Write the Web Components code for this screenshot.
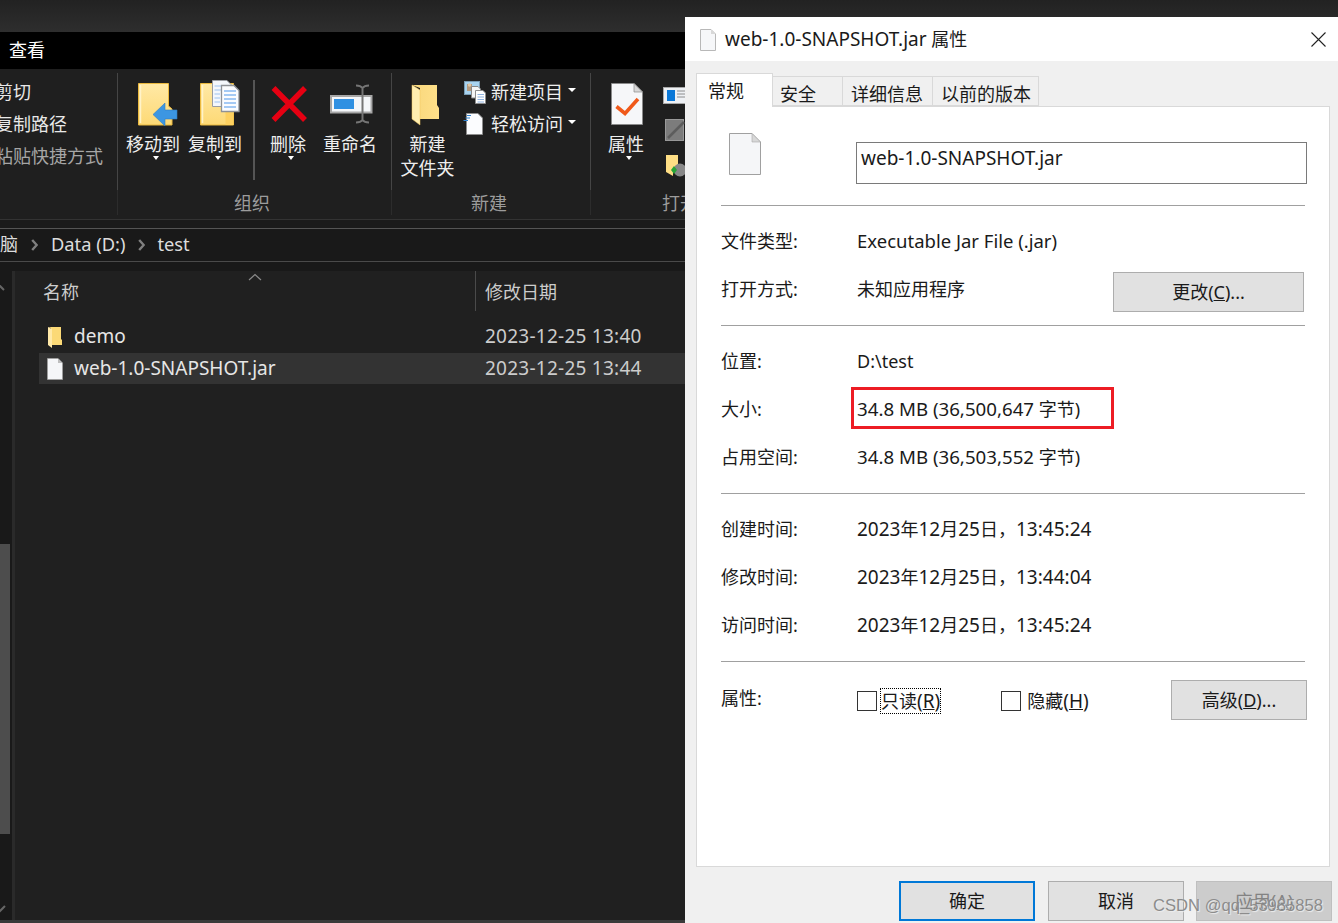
<!DOCTYPE html>
<html lang="zh-CN"><head><meta charset="utf-8"><title>属性</title>
<style>
html,body{margin:0;padding:0;height:100%}
body{width:1338px;height:923px;overflow:hidden;font:18px/24px "Noto Sans","Noto Sans CJK SC",sans-serif;background:#1f1f1f}
</style></head><body>
<app-shell>
  <explorer-window>
    <tab-strip-dark>查看</tab-strip-dark>
    <dark-ribbon>
      <ribbon-group style="width:118px">
        <clip-list>
          <clip-item>剪切</clip-item><clip-item>复制路径</clip-item><clip-item dim>粘贴快捷方式</clip-item>
        </clip-list>
      </ribbon-group>
      <ribbon-group label="组织" style="width:274px;--pad:4px;--labr:5px">
        <ribbon-button caret>
          <svg slot="icon" width="62" height="52" viewBox="122 78 62 52">
            <defs><linearGradient id="fg" x1="0" y1="0" x2="0" y2="1"><stop offset="0" stop-color="#ffe9a6"/><stop offset="1" stop-color="#fdd975"/></linearGradient></defs>
            <path d="M138.500 83.500H168.500V106L172 109V125H138.500Z" fill="url(#fg)" stroke="#eab93f"/>
            <path d="M140.500 85V123" stroke="#fff3c9" stroke-width="1.500"/>
            <path d="M153 114.500L165 103V110H177V119H165V126Z" fill="#3c96e2" stroke="#2f7cc4" stroke-width=".6"/>
          </svg>移动到</ribbon-button>
        <ribbon-button caret>
          <svg slot="icon" width="62" height="52" viewBox="184 78 62 52">
            <path d="M200.500 83.500H233.500V125H200.500Z" fill="url(#fg)" stroke="#eab93f"/>
            <path d="M202.500 85V123" stroke="#fff3c9" stroke-width="1.500"/>
            <path d="M225.500 108V125H233.500V108Z" fill="#fdd05f"/>
            <path d="M212.500 80.500H227L232.500 86V106.500H212.500Z" fill="#f4f7fc" stroke="#9a9da3"/>
            <path d="M214.500 86H224M214.500 90H224M214.500 94H220M214.500 98H220M214.500 102H220" stroke="#9dc2ef"/>
            <path d="M221.500 85.500H234L239 90.500V111.500H221.500Z" fill="#fbfcff" stroke="#8f9297" stroke-width="1.300"/>
            <path d="M224 91H236M224 95H236M224 99H236M224 103H236M224 107H236" stroke="#4f97ea"/>
          </svg>复制到</ribbon-button>
        <v-rule></v-rule>
        <ribbon-button caret>
          <svg slot="icon" width="62" height="52" viewBox="257 78 62 52">
            <path d="M273.500 88L305 120M305 88L273.500 120" stroke="#e60012" stroke-width="5.500"/>
          </svg>删除</ribbon-button>
        <ribbon-button>
          <svg slot="icon" width="62" height="52" viewBox="319 78 62 52">
            <rect x="331" y="96" width="40.500" height="16.500" fill="#f4f6f9" stroke="#a6a6a6" stroke-width="2"/>
            <rect x="334" y="99" width="20" height="10" fill="#2f90e2"/>
            <path d="M362.500 88V120M356 85.500C359 85.500 361 86 362.500 88C364 86 366 85.500 369 85.500M356 122.500C359 122.500 361 122 362.500 120C364 122 366 122.500 369 122.500" fill="none" stroke="#757575" stroke-width="2"/>
          </svg>重命名</ribbon-button>
      </ribbon-group>
      <ribbon-group label="新建" style="width:199px;--pad:8px;--labr:4px">
        <ribbon-button narrow>
          <svg slot="icon" width="55" height="52" viewBox="400 78 55 52">
            <defs><linearGradient id="nf" x1="0" y1="0" x2="1" y2="0"><stop offset="0" stop-color="#f8d77c"/><stop offset="1" stop-color="#ffe08a"/></linearGradient></defs>
            <path d="M412 85H437V105L439 108V119H420V88Z" fill="url(#nf)"/>
            <path d="M412 85L420 90V125L412 119Z" fill="#ffeeb0" stroke="#f0c65e" stroke-width=".5"/>
          </svg>新建<br>文件夹</ribbon-button>
        <small-col>
          <small-button caret>
            <svg slot="icon" width="24" height="26" viewBox="463 79 24 26">
              <rect x="464.500" y="81.500" width="15" height="13" fill="#a8d3ef" stroke="#7a9cb4"/>
              <rect x="467" y="84" width="5" height="7" fill="#b59a7e"/><circle cx="469.500" cy="85" r="1.700" fill="#e0c8a8"/>
              <path d="M471.500 86.500H478L480.500 89V98H471.500Z" fill="#f5f5f5" stroke="#888"/>
              <path d="M475.500 90.500H483L485.500 93V103.500H475.500Z" fill="#fff" stroke="#8d8d8d"/>
              <path d="M477.500 94.500H484M477.500 97H484M477.500 99.500H484M477.500 102H484" stroke="#8fb3e0"/>
            </svg>新建项目</small-button>
          <small-button caret>
            <svg slot="icon" width="24" height="26" viewBox="463 111 24 26">
              <path d="M466.500 113.500H478L482.500 118V134.500H466.500Z" fill="#fbfcfe" stroke="#8d8d8d"/>
              <path d="M467 115.500H471M465.500 118H470M463.500 120.500H468" stroke="#2f83d2" stroke-width="1.200"/>
            </svg>轻松访问</small-button>
        </small-col>
      </ribbon-group>
      <ribbon-group label="打开" style="flex:1;--pad:4px;--lab:71px;--labalign:left">
        <ribbon-button caret>
          <svg slot="icon" width="62" height="52" viewBox="595 78 62 52">
            <path d="M611.500 83.500H634L642.500 92V124.500H611.500Z" fill="#f6f7f9" stroke="#8a8a8a"/>
            <path d="M634 83.500V92H642.500Z" fill="#d8d8d8" stroke="#8a8a8a" stroke-width=".7"/>
            <path d="M616.500 106.500L625 113.500L638 99" fill="none" stroke="#f0591a" stroke-width="3.600"/>
          </svg>属性</ribbon-button>
        <svg class="open-icons" width="30" height="104" viewBox="660 76 30 104" style="margin:3px 0 0 3px;flex:none">
          <rect x="663.500" y="87.500" width="30" height="16" fill="#eef1f5" stroke="#a9a9a9"/>
          <rect x="667" y="90" width="8" height="11" fill="#0a78d8"/>
          <path d="M677 91H685M677 94H685M677 97H685" stroke="#8c8c8c"/>
          <rect x="665.500" y="119.500" width="18" height="21" fill="#7c7c7c" stroke="#999"/>
          <path d="M668 138L684 122" stroke="#5d5d5d" stroke-width="2.500"/>
          <path d="M666 155H678V170H673V176L666 172Z" fill="#ffdf85"/>
          <circle cx="680" cy="170" r="6.500" fill="#888"/>
          <path d="M671 170H677L674 166ZM671 170H677L674 174Z" fill="#27a536"/>
        </svg>
      </ribbon-group>
    </dark-ribbon>
    <ribbon-gap></ribbon-gap>
    <address-bar>
      <crumb-part>脑</crumb-part><bar-chevron></bar-chevron>
      <crumb-part><latin-text style="font-size:18.300px">Data (D:)</latin-text></crumb-part><bar-chevron style="margin-right:12px"></bar-chevron>
      <crumb-part><latin-text style="font-size:18.300px">test</latin-text></crumb-part>
    </address-bar>
    <file-area>
      <column-header></column-header>
      <file-row name="demo" date="2023-12-25 13:40">
        <svg slot="icon" width="18" height="24" viewBox="0 0 18 24"><path d="M2 2H15V14L16 15V20H5V3Z" fill="#fbd976"/><path d="M2 2L6 4V23L2 20Z" fill="#ffe9a8"/></svg>
      </file-row>
      <file-row selected name="web-1.0-SNAPSHOT.jar" date="2023-12-25 13:44">
        <svg slot="icon" width="18" height="24" viewBox="0 0 18 24"><path d="M1.500 1.500H12L16.500 6V22.500H1.500Z" fill="#f5f6f8" stroke="#a0a0a0" stroke-width=".8"/><path d="M12 1.500V6H16.500Z" fill="#bdbdbd"/></svg>
      </file-row>
    </file-area>
  </explorer-window>
  <properties-dialog>
    <dialog-title><latin-text>web-1.0-SNAPSHOT.jar</latin-text> 属性</dialog-title>
    <tab-row>
      <prop-tab active style="width:77px">常规</prop-tab>
      <prop-tab style="width:70px">安全</prop-tab>
      <prop-tab style="width:90px;--tp:8px">详细信息</prop-tab>
      <prop-tab style="width:106px;--tp:8px">以前的版本</prop-tab>
    </tab-row>
    <prop-panel>
      <name-row><latin-text>web-1.0-SNAPSHOT.jar</latin-text></name-row>
      <h-sep></h-sep>
      <row-group>
        <info-row label="文件类型:"><latin-text style="font-size:18.500px">Executable Jar File (.jar)</latin-text></info-row>
        <info-row label="打开方式:">未知应用程序<win-button slot="end" style="width:191px;margin:6px 2px 0 0">更改(<u>C</u>)...</win-button></info-row>
      </row-group>
      <h-sep></h-sep>
      <row-group>
        <info-row label="位置:">D:\test</info-row>
        <info-row label="大小:"><latin-text style="font-size:18.700px">34.8 MB (36,500,647</latin-text> 字节)</info-row>
        <info-row label="占用空间:"><latin-text style="font-size:18.700px">34.8 MB (36,503,552</latin-text> 字节)</info-row>
      </row-group>
      <h-sep></h-sep>
      <row-group>
        <info-row label="创建时间:"><latin-text>2023</latin-text>年<latin-text>12</latin-text>月<latin-text>25</latin-text>日，<latin-text>13:45:24</latin-text></info-row>
        <info-row label="修改时间:"><latin-text>2023</latin-text>年<latin-text>12</latin-text>月<latin-text>25</latin-text>日，<latin-text>13:44:04</latin-text></info-row>
        <info-row label="访问时间:"><latin-text>2023</latin-text>年<latin-text>12</latin-text>月<latin-text>25</latin-text>日，<latin-text>13:45:24</latin-text></info-row>
      </row-group>
      <h-sep></h-sep>
      <attr-row>
        <win-check focused>只读<latin-text>(<u>R</u>)</latin-text></win-check>
        <win-check>隐藏<latin-text>(<u>H</u>)</latin-text></win-check>
        <win-button slot="end" style="width:136px">高级(<u>D</u>)...</win-button>
      </attr-row>
    </prop-panel>
    <button-row>
      <win-button primary style="width:136px">确定</win-button>
      <win-button style="width:136px;margin-left:13px">取消</win-button>
      <win-button disabled style="width:136px;margin-left:12px">应用(<u>A</u>)</win-button>
    </button-row>
    <red-mark></red-mark>
  </properties-dialog>
  <water-mark>CSDN @qq_53985858</water-mark>
</app-shell>
<script>
function def(name,html){
  customElements.define(name,class extends HTMLElement{
    connectedCallback(){
      if(this.shadowRoot)return;
      const r=this.attachShadow({mode:'open'});
      r.innerHTML=typeof html==='function'?html(this):html;
    }
  });
}
def('latin-text',`<style>:host{display:inline;font-size:19px}</style><slot></slot>`);
def('app-shell',`<style>:host{display:flex;position:relative;width:1338px;height:923px;overflow:hidden;background:linear-gradient(#222,#2e2e2e 32px,#2e2e2e 33px,#1f1f1f 33px)}</style><slot></slot>`);
def('explorer-window',`<style>:host{display:flex;flex-direction:column;width:685px;flex:none;overflow:hidden;padding-top:32px;box-sizing:border-box;height:923px;color:#e8e8e8}</style><slot></slot>`);
def('tab-strip-dark',`<style>:host{display:flex;align-items:center;box-sizing:border-box;height:37px;background:#000;color:#fff;padding:0 0 2px 9px}</style><slot></slot>`);
def('dark-ribbon',`<style>:host{display:flex;height:150px;background:#1f1f1f;border-bottom:1px solid #333}</style><slot></slot>`);
def('ribbon-gap',`<style>:host{display:block;height:8px;background:#1b1b1b}</style>`);
def('ribbon-group',h=>`<style>:host{display:flex;flex-direction:column;flex:none;box-sizing:border-box}
.b{display:flex;height:117px;margin-top:4px;padding-left:var(--pad,0);border-right:1px solid #454545;box-sizing:border-box}
.l{height:25px;line-height:27px;border-right:1px solid #2c2c2c;text-align:var(--labalign,center);padding-left:var(--lab,0);padding-right:var(--labr,0);color:#9c9c9c;white-space:nowrap;overflow:hidden;box-sizing:border-box}</style>
<div class="b"><slot></slot></div><div class="l">${h.getAttribute('label')||''}</div>`);
def('clip-list',`<style>:host{display:block;margin:3px 0 0 -5px;white-space:nowrap}</style><slot></slot>`);
def('clip-item',h=>`<style>:host{display:block;height:32px;line-height:32px;color:${h.hasAttribute('dim')?'#a6a6a6':'#e8e8e8'}}</style><slot></slot>`);
def('ribbon-button',h=>`<style>:host{display:flex;flex-direction:column;align-items:center;width:${h.hasAttribute('narrow')?55:62}px;flex:none;padding-top:5px;text-align:center;color:#eee}
.i{height:54px;display:block}.t{white-space:nowrap}.c{width:0;height:0;border:3.500px solid transparent;border-top:4px solid #fff;border-bottom:0;margin-left:5px}</style>
<div class="i"><slot name="icon"></slot></div><div class="t"><slot></slot></div>${h.hasAttribute('caret')?'<div class="c"></div>':''}`);
def('v-rule',`<style>:host{display:block;width:2px;height:100px;background:#555;margin:7px 2px 0 7px;flex:none}</style>`);
def('small-col',`<style>:host{display:flex;flex-direction:column;margin:3px 0 0 8px;flex:none}</style><slot></slot>`);
def('small-button',h=>`<style>:host{display:flex;align-items:center;height:32px;color:#eee;white-space:nowrap}
.i{width:28px;height:26px;flex:none}.c{width:0;height:0;border:4px solid transparent;border-top-color:#fff;border-bottom:0;margin:-4px 0 0 5px}</style>
<div class="i"><slot name="icon"></slot></div><slot></slot>${h.hasAttribute('caret')?'<div class="c"></div>':''}`);
def('address-bar',`<style>:host{display:flex;align-items:center;height:34px;box-sizing:border-box;border-top:1px solid #555;border-bottom:1px solid #4a4a4a;background:#191919;white-space:nowrap;padding-bottom:2px}</style><slot></slot>`);
def('crumb-part',`<style>:host{display:block;color:#ddd}</style><slot></slot>`);
def('bar-chevron',`<style>:host{display:block;width:7px;height:12px;margin:2px 13px 0 13px;flex:none}svg{display:block}</style><svg width="7" height="12" viewBox="0 0 7 12"><path d="M1.200 1L5.700 6L1.200 11" fill="none" stroke="#808080" stroke-width="2.400"/></svg>`);
def('file-area',`<style>:host{display:block;flex:1;position:relative;background:#191919;padding-top:9px}
.w{display:flex;height:649px;border-bottom:3px solid #3a3a3a}
.n{width:12px;flex:none;padding-top:273px;box-sizing:border-box;position:relative}
.t{width:10px;height:290px;background:#4d4d4d}
.s{width:3px;background:#2a2a2a;flex:none}
.m{flex:1;background:#202020;padding-left:24px}
svg{position:absolute;left:0}
</style><div class="w"><div class="n"><svg style="top:12px" width="6" height="8" viewBox="0 0 6 8"><path d="M-2 1L4 7" stroke="#666" stroke-width="2"/></svg><div class="t"></div><svg style="top:634px" width="6" height="8" viewBox="0 0 6 8"><path d="M-1 7L5 1" stroke="#666" stroke-width="2"/></svg></div><div class="s"></div><div class="m"><slot></slot></div></div>`);
def('column-header',`<style>:host{display:flex;height:41px;margin-bottom:9px;color:#ccc;position:relative}
.a{width:432px;padding-left:4px;border-right:1px solid #4a4a4a;line-height:43px;margin-bottom:1px}
.b{padding-left:9px;line-height:43px}
svg{position:absolute;left:209px;top:2px}</style>
<div class="a">名称</div><div class="b">修改日期</div>
<svg width="14" height="8" viewBox="0 0 14 8"><path d="M1 7L7 1.500L13 7" fill="none" stroke="#8a8a8a" stroke-width="1.200"/></svg>`);
def('file-row',h=>`<style>:host{display:grid;grid-template-columns:35px 411px 1fr;align-items:center;height:31px;margin-bottom:1px;background:${h.hasAttribute('selected')?'#333':'transparent'};color:#e6e6e6;white-space:nowrap}
.i{padding-left:7px;height:24px;display:block}.n,.d{font-size:19px;margin-top:-2px}.d{color:#ccc;letter-spacing:.25px}</style>
<div class="i"><slot name="icon"></slot></div><div class="n">${h.getAttribute('name')}</div><div class="d">${h.getAttribute('date')}</div>`);
def('properties-dialog',`<style>:host{display:flex;flex-direction:column;position:relative;width:653px;height:906px;margin-top:17px;flex:none;background:#f0f0f0;color:#1a1a1a}</style><slot></slot>`);
def('dialog-title',`<style>:host{display:flex;align-items:center;height:44px;background:#fff;color:#1a1a1a;padding-left:15px;white-space:pre}
svg{flex:none}.i{margin-right:9px;margin-top:1px}.x{margin-left:auto;margin-right:12px}.t{margin-top:-1px}</style>
<svg class="i" width="16" height="22" viewBox="0 0 16 22"><path d="M.5 .5H11L15.500 5V21.500H.5Z" fill="#f6f7f9" stroke="#b8b8b8"/><path d="M11 .5V5H15.500Z" fill="#d8d8d8"/></svg><div class="t"><slot></slot></div>
<svg class="x" width="15" height="15" viewBox="0 0 15 15"><path d="M.5 .5L14.500 14.500M14.500 .5L.5 14.500" stroke="#222" stroke-width="1.100"/></svg>`);
def('tab-row',`<style>:host{display:flex;align-items:flex-end;margin:12px 0 0 11px;height:34px;position:relative;z-index:1;margin-bottom:-1px}</style><slot></slot>`);
def('prop-tab',h=>{const a=h.hasAttribute('active');return `<style>:host{display:block;box-sizing:border-box;flex:none;white-space:nowrap;${a?'height:34px;background:#fff;border:1px solid #d9d9d9;border-bottom:0;line-height:34px;padding-left:11px;margin-bottom:0':'height:30px;background:#f0f0f0;border:1px solid #d9d9d9;border-left:0;line-height:34px;padding-left:var(--tp,7px);margin-bottom:1px'}}</style><slot></slot>`});
def('prop-panel',`<style>:host{display:block;box-sizing:border-box;width:634px;height:761px;margin-left:11px;background:#fff;border:1px solid #d9d9d9;padding:0 23px 0 24px}</style><slot></slot>`);
def('name-row',`<style>:host{display:flex;height:98px;box-sizing:border-box;padding:26px 0 0 8px;align-items:flex-start}
svg{flex:none}.b{box-sizing:border-box;flex:none;width:451px;height:42px;margin:9px 0 0 95px;border:1px solid #7a7a7a;padding:3px 4px;background:#fff;color:#1a1a1a}</style>
<svg width="32" height="42" viewBox="0 0 32 42"><path d="M.5 .5H23L31.500 9V41.500H.5Z" fill="#f5f6f8" stroke="#a0a0a0"/><path d="M23 .5V9H31.500Z" fill="#d8d8d8" stroke="#a8a8a8" stroke-width=".6"/></svg>
<div class="b"><slot></slot></div>`);
def('h-sep',`<style>:host{display:block;height:1px;background:#a0a0a0;margin-right:1px}</style>`);
def('row-group',`<style>:host{display:block;padding:11px 0 12px}</style><slot></slot>`);
def('info-row',h=>`<style>:host{display:flex;align-items:center;height:48px;white-space:nowrap}.l{width:136px;flex:none}.e{margin-left:auto;display:flex}</style>
<div class="l">${h.getAttribute('label')}</div><div><slot></slot></div><div class="e"><slot name="end"></slot></div>`);
def('attr-row',`<style>:host{display:flex;align-items:center;height:40px;margin-top:18px;white-space:nowrap}
.l{width:136px;flex:none;align-self:flex-start;margin-top:6px}.e{margin:0 -1px 0 auto;display:flex}.c{display:flex;gap:61px;margin-top:2px}</style>
<div class="l">属性:</div><div class="c"><slot></slot></div><div class="e"><slot name="end"></slot></div>`);
def('win-check',h=>`<style>:host{display:flex;align-items:center;gap:${h.hasAttribute('focused')?4:6}px;white-space:nowrap}
.b{box-sizing:border-box;width:20px;height:20px;border:1.500px solid #333;background:#fff;flex:none}
.t{line-height:24px;${h.hasAttribute('focused')?'outline:1px dotted #000;outline-offset:0':''}}</style><div class="b"></div><div class="t"><slot></slot></div>`);
def('win-button',h=>{const p=h.hasAttribute('primary'),d=h.hasAttribute('disabled');return `<style>:host{display:flex;align-items:center;justify-content:center;box-sizing:border-box;height:40px;flex:none;white-space:nowrap;background:${d?'#ccc':'#e1e1e1'};border:${p?'2px solid #0078d7':d?'1px solid #bfbfbf':'1px solid #adadad'};color:${d?'#838383':'#1a1a1a'}}</style><slot></slot>`});
def('button-row',`<style>:host{display:flex;justify-content:flex-end;margin:14px 6px 0 0}</style><slot></slot>`);
def('red-mark',`<style>:host{display:block;position:absolute;left:166px;top:370px;width:263px;height:42px;box-sizing:border-box;border:3px solid #ed1c24}</style>`);
def('water-mark',`<style>:host{display:block;position:absolute;left:1153px;top:894px;font:16.600px/24px "Liberation Sans",Arial,sans-serif;color:#8c8c8c;text-shadow:1px 1px 1px #eee;white-space:nowrap}</style><slot></slot>`);
</script>
</body></html>
